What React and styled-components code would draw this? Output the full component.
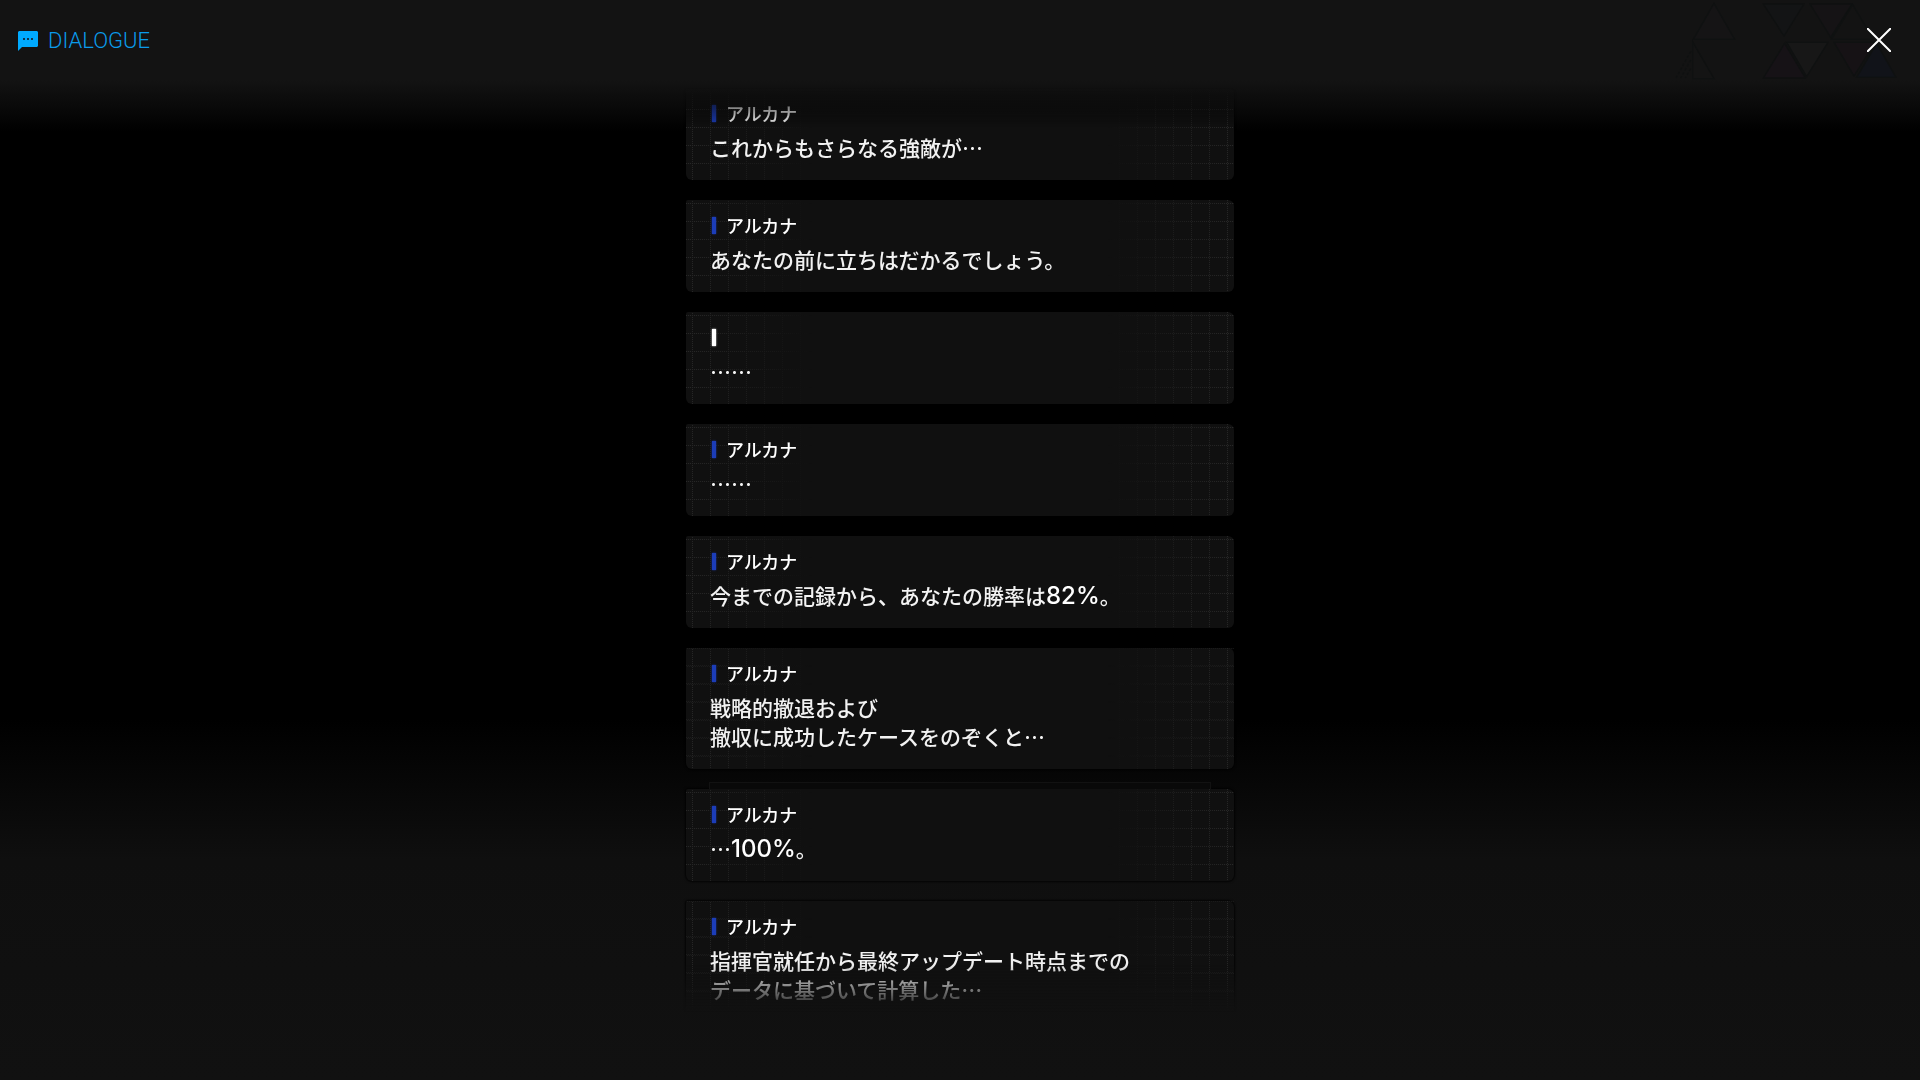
import React from 'react';
import styled, { createGlobalStyle } from 'styled-components';

const GlobalStyle = createGlobalStyle`
  * {
    box-sizing: border-box;
  }

  body {
    margin: 0;
    background: #000;
    color: #f2f2f2;
    font-family: 'Noto Sans CJK JP', sans-serif;
  }
`;

const StyledPage = styled.div`
  display: flex;
  flex-direction: column;
  height: 100vh;
  background: linear-gradient(
    to bottom,
    #131313 0,
    #131313 80px,
    #000 132px,
    #000 calc(100% - 360px),
    #0f0f0f calc(100% - 220px),
    #111 100%
  );
`;

const StyledHeader = styled.header`
  position: relative;
  display: flex;
  flex: none;
  justify-content: space-between;
  align-items: center;
  height: 80px;
  padding: 0 29px 0 18px;
`;

const StyledTriangles = styled.svg`
  position: absolute;
  top: 0;
  right: 0;
  width: 280px;
  height: 80px;
`;

const StyledTitle = styled.h1`
  display: flex;
  align-items: center;
  gap: 9px;
  margin: 0;
  padding-top: 2px;
  color: #0a9bea;
  font-family: Roboto, sans-serif;
  font-size: 22px;
  font-weight: 300;
  line-height: 24px;
`;

const StyledCloseButton = styled.button`
  position: relative;
  display: flex;
  padding: 0;
  background: none;
  border: none;
  color: white;
  cursor: pointer;
`;

const StyledLog = styled.main`
  flex: 1;
  min-height: 0;
  margin: 8px 0 68px;
  overflow-y: auto;
  scrollbar-width: none;
  mask-image: linear-gradient(
    to bottom,
    transparent 0,
    #000 40px,
    #000 calc(100% - 48px),
    transparent 100%
  );
`;

const StyledList = styled.ul`
  display: flex;
  flex-direction: column;
  gap: 20px;
  max-width: 548px;
  margin: 0 auto;
  padding: 0;
  list-style: none;
`;

const StyledCard = styled.li`
  position: relative;
  padding: 13px 24px 18px;
  border-radius: 2px 6px 6px 6px;
  background: #101010;
  box-shadow: 0 0 2px 1px rgba(0, 0, 0, 0.8);
`;

// dotted grid that fades out from one edge of the card
const StyledGrid = styled.div`
  position: absolute;
  top: 0;
  bottom: 0;
  ${(props) => props.$side}: 0;
  width: 126px;
  background: repeating-conic-gradient(#282828 0 25%, #121212 0 50%) 0 0 / 2px 2px;
  mask-image:
    linear-gradient(to ${(props) => (props.$side === 'left' ? 'right' : 'left')}, #000, transparent),
    linear-gradient(to right, #000 1px, transparent 1px),
    linear-gradient(to bottom, #000 1px, transparent 1px);
  mask-size: 100% 100%, 18px 18px, 18px 18px;
  mask-position: 0 0, ${(props) => (props.$side === 'left' ? '6px' : '11px')} 0, 0 calc(50% + 2px);
  mask-composite: intersect, add;
`;

// edge of the choice box that peeks out above a card
const StyledChoiceEdge = styled.div`
  position: absolute;
  right: 23px;
  bottom: 100%;
  left: 23px;
  height: 7px;
  border: 1px solid #121212;
  border-bottom: none;
  background: #090909;
`;

const StyledSpeaker = styled.div`
  position: relative;
  display: flex;
  align-items: center;
  gap: 10px;
  height: 24px;
  padding-left: 2px;
  color: white;
  font-size: 18px;
  font-weight: 500;
  line-height: 24px;
`;

const StyledBar = styled.span`
  width: 4px;
  height: 17px;
  background: ${(props) => props.$color};
  box-shadow: 0 0 2px ${(props) => props.$color};
`;

const StyledText = styled.p`
  position: relative;
  margin: 8px 0 0;
  font-size: 21px;
  font-weight: 500;
  line-height: 29px;
  white-space: pre-line;
`;

const StyledNumber = styled.span`
  color: white;
  font-family: Inter, sans-serif;
  font-size: 24px;
  line-height: 1;
`;

const lines = [
  { speaker: 'アルカナ', text: 'これからもさらなる強敵が…' },
  { speaker: 'アルカナ', text: 'あなたの前に立ちはだかるでしょう。' },
  { speaker: '', text: '……' },
  { speaker: 'アルカナ', text: '……' },
  { speaker: 'アルカナ', text: '今までの記録から、あなたの勝率は82%。' },
  { speaker: 'アルカナ', text: '戦略的撤退および\n撤収に成功したケースをのぞくと…' },
  { speaker: 'アルカナ', text: '…100%。', choiceEdge: true },
  { speaker: 'アルカナ', text: '指揮官就任から最終アップデート時点までの\nデータに基づいて計算した…' },
];

const TriangleArt = () => (
  <StyledTriangles viewBox="0 0 840 240" aria-hidden="true">
    <g stroke="#0f1111" strokeWidth="4">
      <path d="M222 10 L284 118 H160 Z" fill="#151415" />
      <path d="M158 236 V126 L222 236 Z" fill="#141414" />
      <path d="M370 12 H492 L432 108 Z" fill="#131415" />
      <path d="M510 12 H636 L572 112 Z" fill="#151315" />
      <path d="M638 14 L700 118 H574 Z" fill="#131313" />
      <path d="M434 130 L496 234 H370 Z" fill="#161216" />
      <path d="M440 127 H564 L500 230 Z" fill="#171717" />
      <path d="M582 127 H706 L642 228 Z" fill="#161215" />
      <path d="M710 130 L768 232 H650 Z" fill="#111319" />
    </g>
    <path d="M152 154 L108 234 M152 180 L122 234 M152 206 L136 234" stroke="#0f1111" strokeWidth="4" strokeDasharray="8 6" />
  </StyledTriangles>
);

const DialogueIcon = () => (
  <svg width="21" height="20" viewBox="0 0 21 20" aria-hidden="true">
    <path d="M1 0 H19 L20 1 V15 L19 16 H4 L0 20 V1 Z" fill="#00aaff" />
    <path d="M5 7h2v2h-2z M9 7h2v2h-2z M13 7h2v2h-2z" fill="#10344c" />
  </svg>
);

const DialogueText = ({ text }) => (
  <StyledText>
    {text.split(/(\d+%)/).map((part, i) => (
      /\d/.test(part) ? <StyledNumber key={i}>{part}</StyledNumber> : part
    ))}
  </StyledText>
);

const DialogueCard = ({ line }) => (
  <StyledCard>
    {line.choiceEdge && <StyledChoiceEdge />}
    <StyledGrid $side="left" />
    <StyledGrid $side="right" />
    <StyledSpeaker>
      <StyledBar $color={line.speaker ? '#1c3db8' : '#ffffff'} />
      {line.speaker}
    </StyledSpeaker>
    <DialogueText text={line.text} />
  </StyledCard>
);

const App = () => (
  <StyledPage lang="ja">
    <GlobalStyle />
    <StyledHeader>
      <TriangleArt />
      <StyledTitle>
        <DialogueIcon />
        DIALOGUE
      </StyledTitle>
      <StyledCloseButton type="button" aria-label="閉じる">
        <svg width="24" height="24" viewBox="0 0 24 24" fill="none" stroke="currentColor" strokeWidth="2">
          <path d="M0 0 L24 24 M24 0 L0 24" />
        </svg>
      </StyledCloseButton>
    </StyledHeader>
    <StyledLog>
      <StyledList>
        {lines.map((line, i) => <DialogueCard key={i} line={line} />)}
      </StyledList>
    </StyledLog>
  </StyledPage>
);

export default App;
